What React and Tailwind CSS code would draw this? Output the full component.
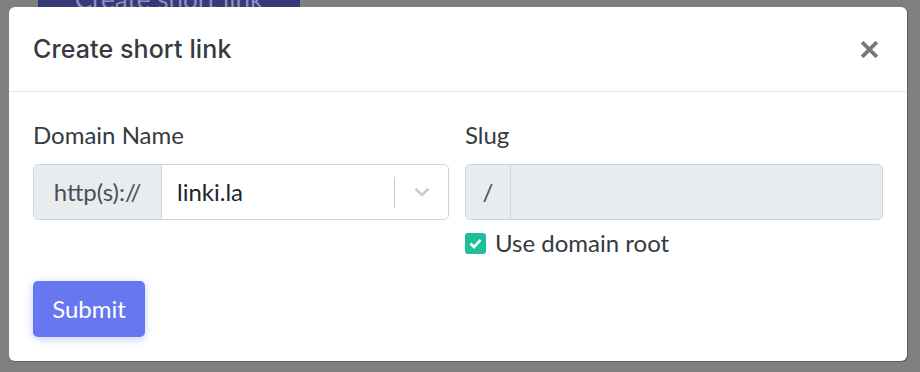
import React, { useState } from "react";

function CloseIcon() {
  return (
    <svg width="17" height="17" viewBox="0 0 17 17">
      <path d="M2.5 2.5 L14.5 14.5 M14.5 2.5 L2.5 14.5" stroke="#777777" strokeWidth="3.8" strokeLinecap="square" />
    </svg>
  );
}

function Chevron() {
  return (
    <svg width="16" height="10" viewBox="0 0 16 10">
      <path d="M1.5 1.8 L8 8 L14.5 1.8" fill="none" stroke="#cccccc" strokeWidth="2.6" />
    </svg>
  );
}

export default function App() {
  const [useRoot, setUseRoot] = useState(true);

  return (
    <div className="relative h-[372px] w-[920px] overflow-hidden bg-[#7f7f7f] font-['Lato','Liberation_Sans',sans-serif]">
      {/* page button behind the overlay */}
      <div className="absolute left-[38px] top-[-20px] flex h-[37px] w-[262px] items-center justify-center bg-[#343a78] text-[26px] leading-none text-[#8c90b8]">
        Create short link
      </div>

      {/* modal */}
      <div className="absolute left-[9px] top-[7px] w-[898px] rounded-[6px] bg-white shadow-[1px_1px_0_#5e5e5e]">
        {/* header */}
        <div className="flex h-[85px] items-center justify-between border-b border-[#e3e3e3] pl-[24px] pr-[28px]">
          <h1 className="pt-[1px] font-['Inter','Noto_Sans',sans-serif] text-[25px] font-medium tracking-[0.1px] text-[#343a40]">
            Create short link
          </h1>
          <button className="flex h-[20px] w-[20px] items-center justify-center">
            <CloseIcon />
          </button>
        </div>

        {/* body */}
        <div className="px-[24px] pb-[24px] pt-[28px]">
          <div className="grid grid-cols-[416px_418px] gap-x-[16px]">
            <div>
              <div className="mb-[14px] text-[24px] leading-[30px] text-[#343a40]">Domain Name</div>
              <div className="flex h-[56px] rounded-[5px] border border-[#d1d5db]">
                <div className="flex w-[128px] items-center justify-center rounded-l-[5px] border-r border-[#d1d5db] bg-[#e9ecef] text-[24px] text-[#495057]">
                  http(s)://
                </div>
                <div className="flex flex-1 items-center pl-[15px] text-[24px] text-[#212529]">linki.la</div>
                <div className="flex items-center">
                  <div className="h-[31px] w-px bg-[#cccccc]" />
                  <div className="flex w-[53px] items-center justify-center">
                    <Chevron />
                  </div>
                </div>
              </div>
            </div>

            <div>
              <div className="mb-[14px] text-[24px] leading-[30px] text-[#343a40]">Slug</div>
              <div className="flex h-[56px] rounded-[5px] border border-[#d1d5db] bg-[#e9ecef]">
                <div className="flex w-[45px] items-center justify-center border-r border-[#d1d5db] text-[24px] text-[#495057]">
                  /
                </div>
                <div className="flex-1" />
              </div>
              <label className="mt-[5px] flex items-center gap-[9px] text-[24px] leading-[36px] text-[#343a40]">
                <span
                  onClick={() => setUseRoot(!useRoot)}
                  className="flex h-[21px] w-[21px] items-center justify-center rounded-[3px] bg-[#1fbf9b]"
                >
                  {useRoot && (
                    <svg width="13" height="11" viewBox="0 0 13 11">
                      <path d="M1.5 5.5 L5 9 L11.5 1.8" fill="none" stroke="white" strokeWidth="2.6" />
                    </svg>
                  )}
                </span>
                Use domain root
              </label>
            </div>
          </div>

          <button className="mt-[20px] h-[56px] w-[112px] rounded-[5px] bg-[#6777ef] text-[24px] text-white shadow-[0_2px_8px_#c5cbf8]">
            Submit
          </button>
        </div>
      </div>
    </div>
  );
}
